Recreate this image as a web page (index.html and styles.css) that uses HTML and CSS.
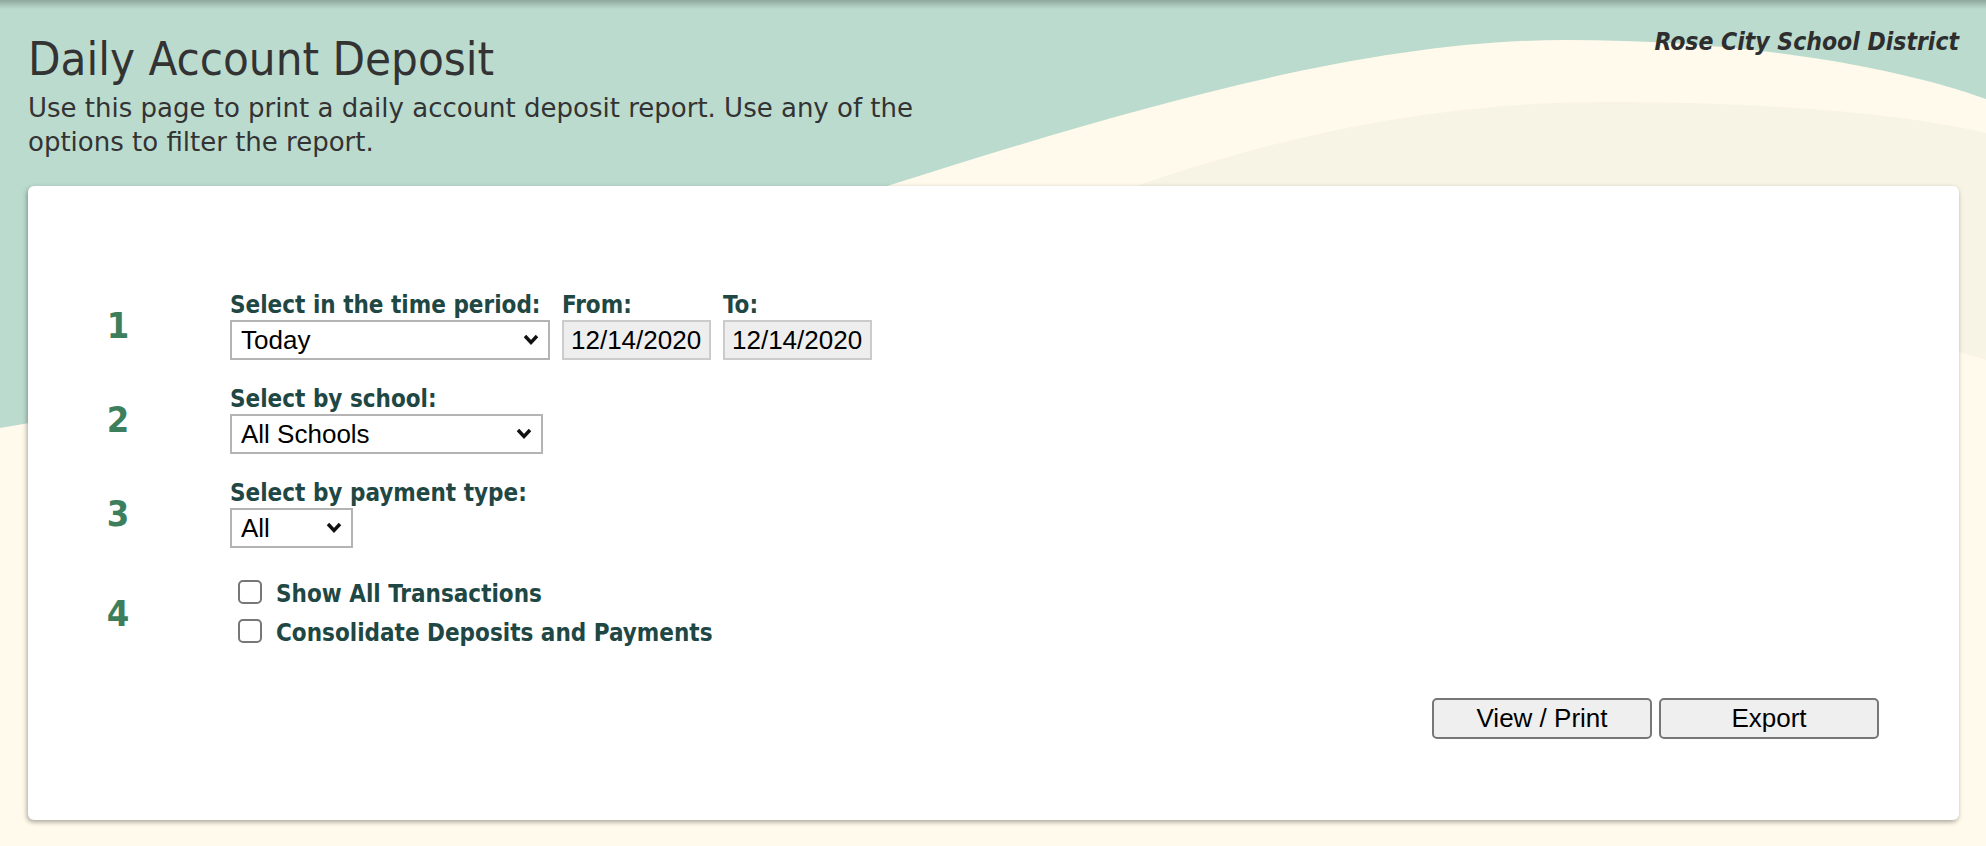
FILE: index.html
```html
<!DOCTYPE html>
<html lang="en">
<head>
    <meta charset="UTF-8">
    <meta name="viewport" content="width=device-width, initial-scale=1.0">
    <title>Daily Account Deposit</title>
    <link rel="stylesheet" href="styles.css">
</head>
<body>
    <svg class="backdrop" viewBox="0 0 1986 846" preserveAspectRatio="none" aria-hidden="true">
        <defs>
            <linearGradient id="shade" x1="0" y1="0" x2="0" y2="1">
                <stop offset="0" stop-color="#000" stop-opacity="0.24"/>
                <stop offset="1" stop-color="#000" stop-opacity="0"/>
            </linearGradient>
        </defs>
        <rect width="1986" height="846" fill="#bcdbcf"/>
        <path d="M0,428 C600,330 1150,40 1566,40 C1750,40 1900,68 1986,99 L1986,846 L0,846 Z" fill="#fffaeb"/>
        <path d="M1000,240 C1250,130 1450,102 1604,102 C1780,102 1910,115 1986,133 L1986,360 C1800,300 1400,300 1000,420 Z" fill="#f7f3e5"/>
        <rect width="1986" height="9" fill="url(#shade)"/>
    </svg>

    <div class="page">
        <header class="top">
            <div class="intro">
                <h1>Daily Account Deposit</h1>
                <p>Use this page to print a daily account deposit report. Use any of the options to filter the report.</p>
            </div>
            <div class="district">Rose City School District</div>
        </header>

        <main class="card">
            <div class="steps">
                <div class="num">1</div>
                <div class="fields">
                    <div class="field">
                        <label for="period">Select in the time period:</label>
                        <span class="select-wrap">
                            <select id="period" class="sel sel-period">
                                <option>Today</option>
                                <option>Yesterday</option>
                                <option>This Week</option>
                            </select>
                            <svg class="chev" viewBox="0 0 16 11"><path d="M2,2 L8,8.5 L14,2"/></svg>
                        </span>
                    </div>
                    <div class="field">
                        <label for="from">From:</label>
                        <input type="text" id="from" class="date" value="12/14/2020" readonly>
                    </div>
                    <div class="field">
                        <label for="to">To:</label>
                        <input type="text" id="to" class="date" value="12/14/2020" readonly>
                    </div>
                </div>

                <div class="num">2</div>
                <div class="field">
                    <label for="school">Select by school:</label>
                    <span class="select-wrap">
                        <select id="school" class="sel sel-school">
                            <option>All Schools</option>
                        </select>
                        <svg class="chev" viewBox="0 0 16 11"><path d="M2,2 L8,8.5 L14,2"/></svg>
                    </span>
                </div>

                <div class="num">3</div>
                <div class="field">
                    <label for="paytype">Select by payment type:</label>
                    <span class="select-wrap">
                        <select id="paytype" class="sel sel-type">
                            <option>All</option>
                            <option>Cash</option>
                            <option>Check</option>
                        </select>
                        <svg class="chev" viewBox="0 0 16 11"><path d="M2,2 L8,8.5 L14,2"/></svg>
                    </span>
                </div>

                <div class="num">4</div>
                <div class="checks">
                    <label class="check"><input type="checkbox"> Show All Transactions</label>
                    <label class="check"><input type="checkbox"> Consolidate Deposits and Payments</label>
                </div>
            </div>

            <div class="actions">
                <button type="button">View / Print</button>
                <button type="button">Export</button>
            </div>
        </main>
    </div>
</body>
</html>
```

FILE: styles.css
```css
html {
    background: #fffaeb;
}
body {
    margin: 0;
    position: relative;
    min-height: 846px;
    font-family: "DejaVu Sans Condensed", "DejaVu Sans", sans-serif;
    font-stretch: condensed;
    color: #333;
}
.backdrop {
    position: absolute;
    top: 0;
    left: 0;
    width: 100%;
    height: 846px;
    z-index: 0;
}
.page {
    position: relative;
    z-index: 1;
    padding: 0 27px 26px 28px;
}
.top {
    display: flex;
    justify-content: space-between;
    align-items: flex-start;
    padding-top: 28px;
}
.intro {
    margin-top: 4px;
}
.intro h1 {
    margin: 0;
    font-size: 47px;
    line-height: 54px;
    font-weight: normal;
    color: #333;
}
.intro p {
    margin: 5px 0 0;
    max-width: 940px;
    font-family: "DejaVu Sans", sans-serif;
    font-stretch: normal;
    font-size: 26px;
    line-height: 34px;
}
.district {
    font-size: 24.5px;
    line-height: 28px;
    font-weight: bold;
    font-style: italic;
    color: #2e2e2e;
}
.card {
    margin-top: 27px;
    background: #fff;
    border-radius: 6px;
    box-shadow: -1px 2px 5px rgba(0, 0, 0, 0.35);
    padding: 105px 80px 81px 0;
}
.steps {
    display: grid;
    grid-template-columns: 180px 1fr;
    column-gap: 22px;
    row-gap: 25px;
}
.num {
    align-self: center;
    text-align: center;
    font-size: 36px;
    font-weight: bold;
    color: #3d7f5c;
}
.fields {
    display: flex;
    gap: 12px;
}
.field {
    display: flex;
    flex-direction: column;
    align-items: flex-start;
}
.field label, .check {
    font-size: 24px;
    line-height: 29px;
    font-weight: bold;
    color: #1f4744;
}
.select-wrap {
    position: relative;
    display: inline-block;
}
.sel {
    appearance: none;
    -webkit-appearance: none;
    height: 40px;
    padding: 0 40px 0 9px;
    border: 2px solid #b4b4b4;
    border-radius: 0;
    background: #fff;
    color: #000;
    font-family: "Liberation Sans", Arial, sans-serif;
    font-size: 26px;
}
.sel-period {
    width: 320px;
}
.sel-school {
    width: 313px;
}
.sel-type {
    width: 123px;
}
.chev {
    position: absolute;
    right: 11px;
    top: 14px;
    width: 16px;
    height: 11px;
    pointer-events: none;
}
.chev path {
    fill: none;
    stroke: #111;
    stroke-width: 3.4;
}
.date {
    box-sizing: border-box;
    width: 149px;
    height: 40px;
    padding: 0 7px;
    border: 2px solid #cbcbcb;
    background: #eee;
    color: #000;
    font-family: "Liberation Sans", Arial, sans-serif;
    font-size: 26px;
}
.checks {
    padding-top: 2px;
}
.check {
    display: flex;
    align-items: flex-start;
    line-height: 39px;
}
.check input {
    appearance: none;
    -webkit-appearance: none;
    width: 24px;
    height: 24px;
    margin: 5px 14px 0 8px;
    border: 2px solid #777;
    border-radius: 5px;
    background: #fff;
}
.actions {
    display: flex;
    justify-content: flex-end;
    gap: 7px;
    margin-top: 45px;
}
.actions button {
    width: 220px;
    height: 41px;
    border: 2px solid #777;
    border-radius: 5px;
    background: #efefef;
    color: #000;
    font-family: "Liberation Sans", Arial, sans-serif;
    font-size: 26px;
    cursor: pointer;
}
```
